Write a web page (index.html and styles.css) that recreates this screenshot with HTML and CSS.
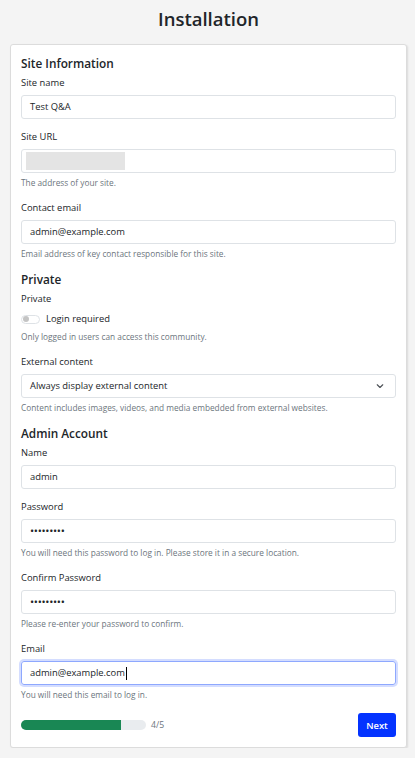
FILE: index.html
```html
<!DOCTYPE html>
<html>
<head>
<meta charset="utf-8">
<link rel="stylesheet" href="styles.css">
</head>
<body>
<h1 class="title">Installation</h1>
<div class="card">
  <h2 class="section">Site Information</h2>
  <div class="group">
    <div class="label">Site name</div>
    <div class="input">Test Q&amp;A</div>
  </div>
  <div class="group">
    <div class="label">Site URL</div>
    <div class="input url"><span class="blur"></span></div>
    <div class="help">The address of your site.</div>
  </div>
  <div class="group">
    <div class="label">Contact email</div>
    <div class="input">admin@example.com</div>
    <div class="help">Email address of key contact responsible for this site.</div>
  </div>
  <h2 class="section">Private</h2>
  <div class="group">
    <div class="label">Private</div>
    <div class="switch-row"><span class="switch"><span class="knob"></span></span><span>Login required</span></div>
    <div class="help">Only logged in users can access this community.</div>
  </div>
  <div class="group">
    <div class="label">External content</div>
    <div class="input select"><span>Always display external content</span>
      <svg class="chev" width="8" height="8" viewBox="0 0 16 16"><path d="M2.5 5.5 8 11l5.5-5.5" fill="none" stroke="#4a4f55" stroke-width="2.2" stroke-linecap="round" stroke-linejoin="round"/></svg>
    </div>
    <div class="help">Content includes images, videos, and media embedded from external websites.</div>
  </div>
  <h2 class="section">Admin Account</h2>
  <div class="group">
    <div class="label">Name</div>
    <div class="input">admin</div>
  </div>
  <div class="group">
    <div class="label">Password</div>
    <div class="input dots">•••••••••</div>
    <div class="help">You will need this password to log in. Please store it in a secure location.</div>
  </div>
  <div class="group">
    <div class="label">Confirm Password</div>
    <div class="input dots">•••••••••</div>
    <div class="help">Please re-enter your password to confirm.</div>
  </div>
  <div class="group">
    <div class="label">Email</div>
    <div class="input focus">admin@example.com<span class="caret"></span></div>
    <div class="help">You will need this email to log in.</div>
  </div>
  <div class="footer">
    <div class="progress-wrap">
      <div class="progress"><div class="bar" style="width:80%"></div></div>
      <span class="step">4/5</span>
    </div>
    <div class="btn">Next</div>
  </div>
</div>
</body>
</html>
```
FILE: styles.css
```css
html, body { margin: 0; padding: 0; }
body {
  background: #f4f4f4;
  font-family: "Open Sans", "Noto Sans", sans-serif;
  color: #212529;
  padding: 0 8px 0 10px;
}
.title {
  margin: 0;
  height: 44px;
  line-height: 37px;
  text-align: center;
  font-size: 18.5px;
  font-weight: 600;
}
.card {
  background: #fff;
  border: 1px solid #dcdcdc;
  border-radius: 3px;
  box-shadow: 1px 1px 2px rgba(0,0,0,0.1);
  padding: 10px 10px 10px 10px;
}
.section {
  margin: 0 0 4px 0;
  font-size: 11.8px;
  line-height: 16px;
  font-weight: 600;
}
.group { margin-bottom: 10px; }
.label {
  font-size: 9.4px;
  line-height: 16px;
  margin-bottom: 4px;
}
.input {
  height: 24px;
  box-sizing: border-box;
  border: 1px solid #dee2e6;
  border-radius: 3px;
  padding: 0 8px;
  font-size: 9.4px;
  line-height: 22px;
  display: flex;
  align-items: center;
}
.url { padding-left: 4px; }
.blur {
  display: block;
  width: 99px;
  height: 18px;
  background: #e4e4e4;
}
.select { justify-content: space-between; }
.chev { margin-right: 3px; }
.dots { font-size: 11px; letter-spacing: -0.3px; }
.focus {
  border-color: #8ea8fe;
  box-shadow: 0 0 0 2px #d4ddff;
}
.caret {
  display: inline-block;
  width: 1px;
  height: 13px;
  background: #000;
  margin-left: 1px;
}
.help {
  margin-top: 3px;
  font-size: 8.3px;
  line-height: 14px;
  color: #6c757d;
}
.switch-row {
  display: flex;
  align-items: center;
  gap: 6px;
  font-size: 9.4px;
  line-height: 16px;
  margin-top: 4px;
}
.switch {
  width: 19px;
  height: 9px;
  box-sizing: border-box;
  border: 1px solid #dee2e6;
  border-radius: 5px;
  display: flex;
  align-items: center;
  padding-left: 1px;
}
.knob {
  width: 6px;
  height: 6px;
  border-radius: 50%;
  background: #c4c4c4;
}
.footer {
  display: flex;
  align-items: center;
  justify-content: space-between;
  margin-top: 11px;
}
.progress-wrap { display: flex; align-items: center; gap: 5px; }
.progress {
  width: 125px;
  height: 10px;
  border-radius: 5px;
  background: #e9ecef;
  overflow: hidden;
}
.bar { height: 100%; background: #198754; }
.step { font-size: 8.7px; color: #6c757d; }
.btn {
  width: 38px;
  height: 24px;
  border-radius: 3px;
  background: #0433ff;
  color: #fff;
  font-size: 9.4px;
  font-weight: 600;
  display: flex;
  align-items: center;
  justify-content: center;
}
```
